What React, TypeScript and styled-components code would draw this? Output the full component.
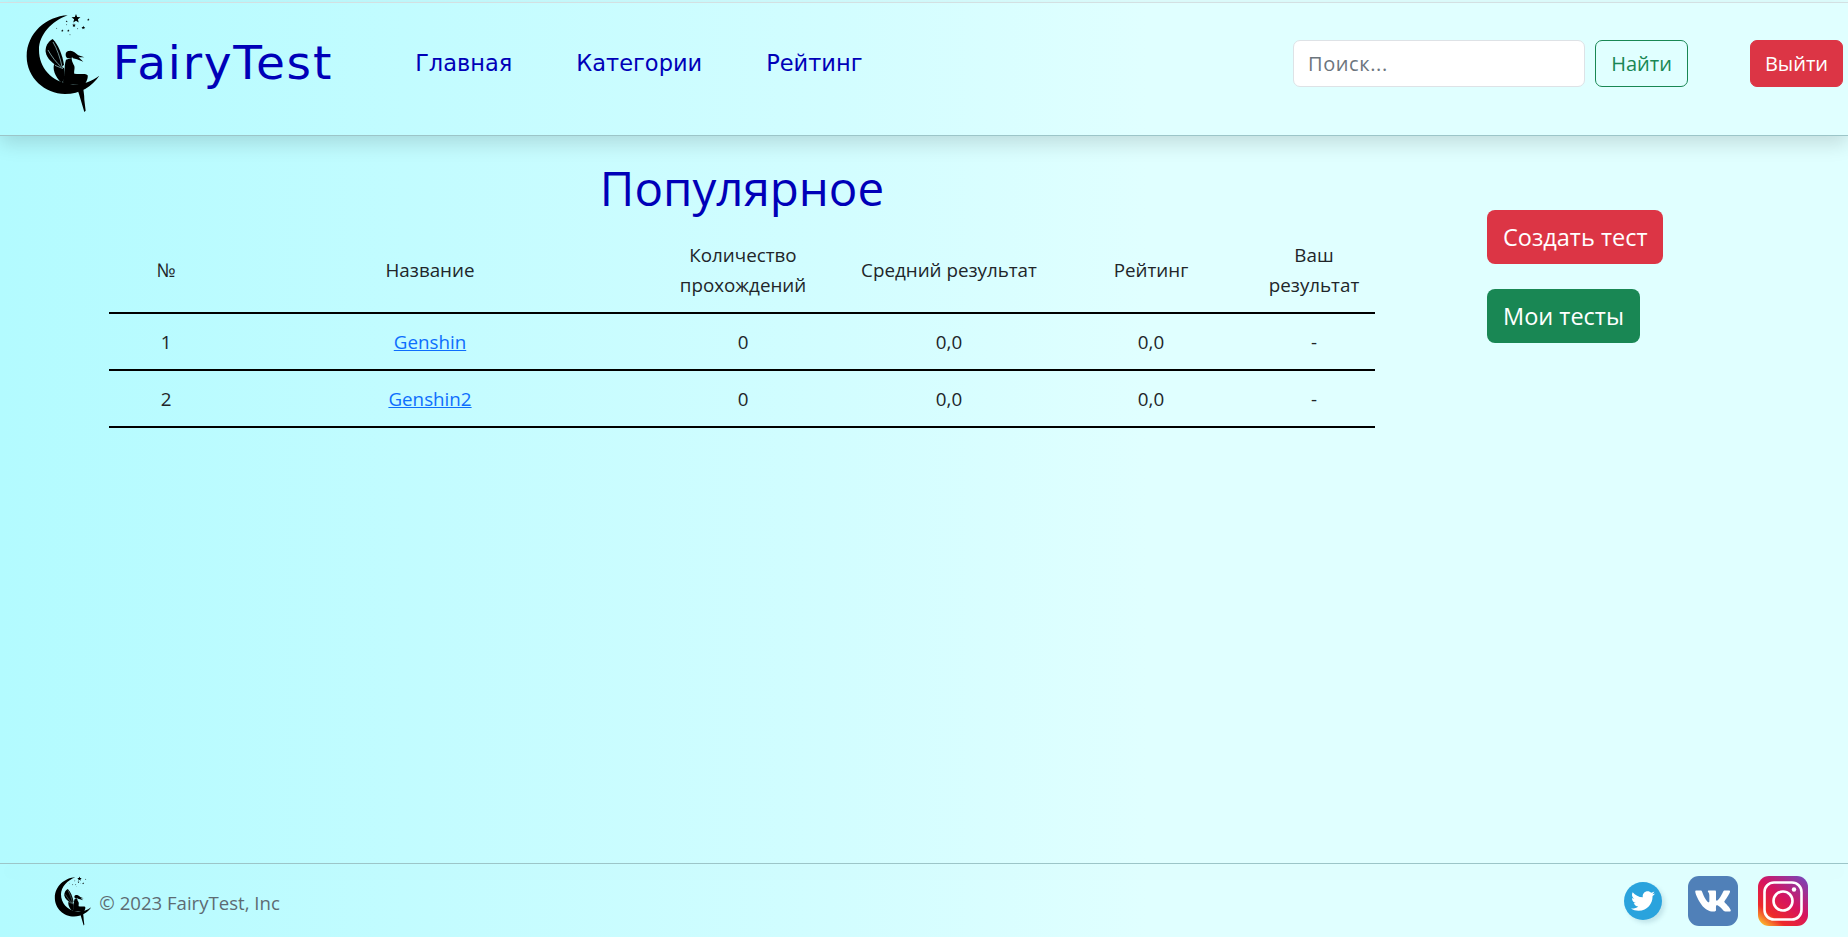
import React from "react";
import styled, { createGlobalStyle } from "styled-components";
import { FaTwitter, FaVk } from "react-icons/fa";

const Global = createGlobalStyle`
  html, body { margin: 0; padding: 0; height: 100%; overflow: hidden; }
  body { font-family: "Open Sans", "Liberation Sans", sans-serif; }
`;

const Page = styled.div`
  height: 937px;
  display: flex;
  flex-direction: column;
  background: linear-gradient(to right, #b3fbff 0%, #d2fdff 45%, #e0ffff 62%, #e0ffff 100%);
  overflow: hidden;
`;

const Header = styled.header`
  height: 132px;
  margin-top: 2px;
  border-top: 1px solid #d3e0e2;
  border-bottom: 1px solid #9cc5c8;
  box-sizing: content-box;
  display: flex;
  align-items: center;
  box-shadow: 0 8px 18px rgba(0, 0, 0, 0.13);
  flex-shrink: 0;
`;

const Brand = styled.a`
  display: flex;
  align-items: center;
  margin-left: 25px;
  margin-top: -12px;
  color: #0000b8;
  text-decoration: none;
`;

const BrandName = styled.span`
  font-family: "DejaVu Sans", sans-serif;
  font-size: 47px;
  letter-spacing: 1.8px;
  line-height: 1;
  margin-left: 11px;
  margin-top: -2px;
  color: #0000b8;
`;

const Nav = styled.nav`
  display: flex;
  gap: 64px;
  margin-left: 82px;
  margin-top: -13px;
`;

const NavLink = styled.a`
  font-family: "DejaVu Sans", sans-serif;
  font-size: 22.5px;
  color: #0000b8;
  text-decoration: none;
`;

const HeaderRight = styled.div`
  margin-left: auto;
  display: flex;
  align-items: center;
  margin-right: 5px;
  margin-top: -11px;
`;

const SearchInput = styled.input`
  width: 292px;
  height: 47px;
  box-sizing: border-box;
  border: 1px solid #dee2e6;
  border-radius: 7px;
  background: #fff;
  padding: 0 14px;
  font-family: "Open Sans", sans-serif;
  font-size: 20px;
  letter-spacing: 0.6px;
  &::placeholder { color: #6c757d; opacity: 1; }
`;

const SmallButton = styled.button<{ $variant: "outline" | "danger" }>`
  height: 47px;
  width: 93px;
  box-sizing: border-box;
  border-radius: 7px;
  font-family: "Open Sans", sans-serif;
  font-size: 20px;
  padding: 0;
  border: 1px solid ${(p) => (p.$variant === "outline" ? "#198754" : "#dc3545")};
  background: ${(p) => (p.$variant === "outline" ? "transparent" : "#dc3545")};
  color: ${(p) => (p.$variant === "outline" ? "#198754" : "#fff")};
  font-weight: ${(p) => (p.$variant === "outline" ? 400 : 500)};
  margin-left: ${(p) => (p.$variant === "outline" ? "10px" : "62px")};
`;

const Main = styled.main`
  flex: 1;
  display: flex;
  align-items: flex-start;
  padding-left: 109px;
  min-height: 0;
`;

const Content = styled.section`
  width: 1266px;
`;

const Title = styled.h1`
  margin: 22px 0 0;
  text-align: center;
  font-family: "Open Sans", sans-serif;
  font-weight: 400;
  font-size: 47.5px;
  line-height: 60px;
  color: #0000b8;
`;

const Table = styled.table`
  width: 100%;
  margin-top: 10px;
  border-collapse: collapse;
  table-layout: fixed;
  font-size: 18.8px;
  color: #212529;
  text-align: center;
`;

const Col = styled.col<{ $w: number }>`
  width: ${(p) => p.$w}px;
`;

const HeadCell = styled.th`
  font-weight: 400;
  padding: 12px 0;
  line-height: 30px;
  border-bottom: 2px solid #000;
`;

const Cell = styled.td`
  height: 57px;
  padding: 0;
  box-sizing: border-box;
  border-bottom: 2px solid #000;
`;

const TestLink = styled.a`
  color: #0d6efd;
  text-decoration: underline;
`;

const Aside = styled.aside`
  margin-left: 112px;
  padding-top: 74px;
  display: flex;
  flex-direction: column;
  align-items: flex-start;
  gap: 25px;
`;

const BigButton = styled.button<{ $green?: boolean }>`
  height: 54px;
  padding: 0 16px;
  border: none;
  border-radius: 8px;
  font-family: "Open Sans", sans-serif;
  font-size: 23.5px;
  color: #fff;
  background: ${(p) => (p.$green ? "#198754" : "#dc3545")};
`;

const Footer = styled.footer`
  height: 74px;
  flex-shrink: 0;
  border-top: 1px solid #9cc5c8;
  box-sizing: border-box;
  display: flex;
  align-items: center;
  padding: 0 40px 0 54px;
  position: relative;
`;

const FooterShade = styled.div`
  position: absolute;
  left: 0;
  right: 0;
  top: -1px;
  height: 1px;
  box-shadow: 0 8px 18px rgba(0, 0, 0, 0.12);
`;

const Copy = styled.span`
  font-size: 18.6px;
  color: #5d6b72;
  margin-left: 7px;
  margin-top: 4px;
  position: relative;
`;

const Socials = styled.div`
  margin-left: auto;
  display: flex;
  align-items: center;
  gap: 20px;
  position: relative;
`;

const TwitterBadge = styled.div`
  width: 38px;
  height: 38px;
  border-radius: 50%;
  background: #2aa3dd;
  color: #fff;
  display: flex;
  align-items: center;
  justify-content: center;
  margin-right: 6px;
  box-shadow: 3px 3px 4px rgba(60, 110, 140, 0.18);
`;

const VkBadge = styled.div`
  width: 50px;
  height: 50px;
  border-radius: 11px;
  background: #5080b8;
  color: #fff;
  display: flex;
  align-items: center;
  justify-content: center;
`;

const LogoMark = styled.svg<{ $h: number }>`
  height: ${(p) => p.$h}px;
  flex-shrink: 0;
  display: block;
`;

const star = (cx: number, cy: number, r: number) => {
  const pts: string[] = [];
  for (let i = 0; i < 10; i++) {
    const a = -Math.PI / 2 + (i * Math.PI) / 5;
    const q = i % 2 ? r * 0.42 : r;
    pts.push(`${(cx + q * Math.cos(a)).toFixed(1)},${(cy + q * Math.sin(a)).toFixed(1)}`);
  }
  return pts.join(" ");
};

const Logo = ({ h }: { h: number }) => (
  <LogoMark $h={h} viewBox="30 25 230 300" fill="#000">
    <path d="M158 32C95 35 35 85 35 155C35 220 90 268 150 268C195 268 232 245 253 213C225 234 195 242 165 238C110 230 72 190 72 135C72 90 110 50 158 32Z" />
    <polygon points={star(183, 42, 14)} />
    {[
      [220, 45, 4], [205, 69, 6], [177, 62, 6], [142, 78, 4], [160, 78, 4],
      [155, 50, 3], [125, 71, 2], [165, 90, 2], [188, 72, 2], [155, 60, 2],
    ].map(([x, y, r], i) => (
      <polygon key={i} points={star(x, y, r)} />
    ))}
    <path d="M113 103C100 110 90 125 92 142C95 160 112 178 138 190L147 180C142 150 130 120 113 103Z" />
    <path d="M118 178C112 190 118 215 140 235C150 225 152 205 147 190Z" />
    <path d="M114 112C126 132 136 160 141 186M99 136C110 156 124 174 139 187M120 182L144 192" fill="none" stroke="#c0fbff" strokeWidth="1.8" />
    <circle cx="163" cy="150" r="11" />
    <path d="M158 140C172 134 180 145 190 152L208 158L191 158L205 171L186 164L174 161Z" />
    <path d="M153 165C150 175 147 190 150 205C147 215 142 228 145 238L175 238L190 240C188 252 188 258 192 268L200 295L208 322L212 318L208 285C208 270 205 258 205 250C212 235 220 222 218 212C214 205 195 210 178 207C176 198 182 188 176 180C172 172 170 168 170 160Z" />
  </LogoMark>
);

const InstagramIcon = () => (
  <svg width="50" height="50" viewBox="0 0 50 50">
    <defs>
      <linearGradient id="ig" x1="0.1" y1="1" x2="0.9" y2="0">
        <stop offset="0" stopColor="#fdc02f" />
        <stop offset="0.22" stopColor="#ee2a2a" />
        <stop offset="0.55" stopColor="#d6145f" />
        <stop offset="1" stopColor="#7a44b8" />
      </linearGradient>
    </defs>
    <rect width="50" height="50" rx="11" fill="url(#ig)" />
    <rect x="6.5" y="6.5" width="37" height="37" rx="9.5" fill="none" stroke="#fff" strokeWidth="2.6" />
    <circle cx="25" cy="25" r="9.5" fill="none" stroke="#fff" strokeWidth="2.6" />
    <circle cx="36" cy="13.5" r="2.2" fill="#fff" />
  </svg>
);

const rows = [
  { n: 1, name: "Genshin" },
  { n: 2, name: "Genshin2" },
];

export default function App() {
  return (
    <Page>
      <Global />
      <Header>
        <Brand href="#">
          <Logo h={100} />
          <BrandName>FairyTest</BrandName>
        </Brand>
        <Nav>
          <NavLink href="#">Главная</NavLink>
          <NavLink href="#">Категории</NavLink>
          <NavLink href="#">Рейтинг</NavLink>
        </Nav>
        <HeaderRight>
          <SearchInput placeholder="Поиск..." />
          <SmallButton $variant="outline">Найти</SmallButton>
          <SmallButton $variant="danger">Выйти</SmallButton>
        </HeaderRight>
      </Header>
      <Main>
        <Content>
          <Title>Популярное</Title>
          <Table>
            <colgroup>
              <Col $w={114} />
              <Col $w={414} />
              <Col $w={212} />
              <Col $w={200} />
              <Col $w={204} />
              <Col $w={122} />
            </colgroup>
            <thead>
              <tr>
                <HeadCell>№</HeadCell>
                <HeadCell>Название</HeadCell>
                <HeadCell>Количество прохождений</HeadCell>
                <HeadCell>Средний результат</HeadCell>
                <HeadCell>Рейтинг</HeadCell>
                <HeadCell>Ваш результат</HeadCell>
              </tr>
            </thead>
            <tbody>
              {rows.map((r) => (
                <tr key={r.n}>
                  <Cell>{r.n}</Cell>
                  <Cell><TestLink href="#">{r.name}</TestLink></Cell>
                  <Cell>0</Cell>
                  <Cell>0,0</Cell>
                  <Cell>0,0</Cell>
                  <Cell>-</Cell>
                </tr>
              ))}
            </tbody>
          </Table>
        </Content>
        <Aside>
          <BigButton>Создать тест</BigButton>
          <BigButton $green>Мои тесты</BigButton>
        </Aside>
      </Main>
      <Footer>
        <FooterShade />
        <Logo h={50} />
        <Copy>© 2023 FairyTest, Inc</Copy>
        <Socials>
          <TwitterBadge><FaTwitter size={24} /></TwitterBadge>
          <VkBadge><FaVk size={38} /></VkBadge>
          <InstagramIcon />
        </Socials>
      </Footer>
    </Page>
  );
}
